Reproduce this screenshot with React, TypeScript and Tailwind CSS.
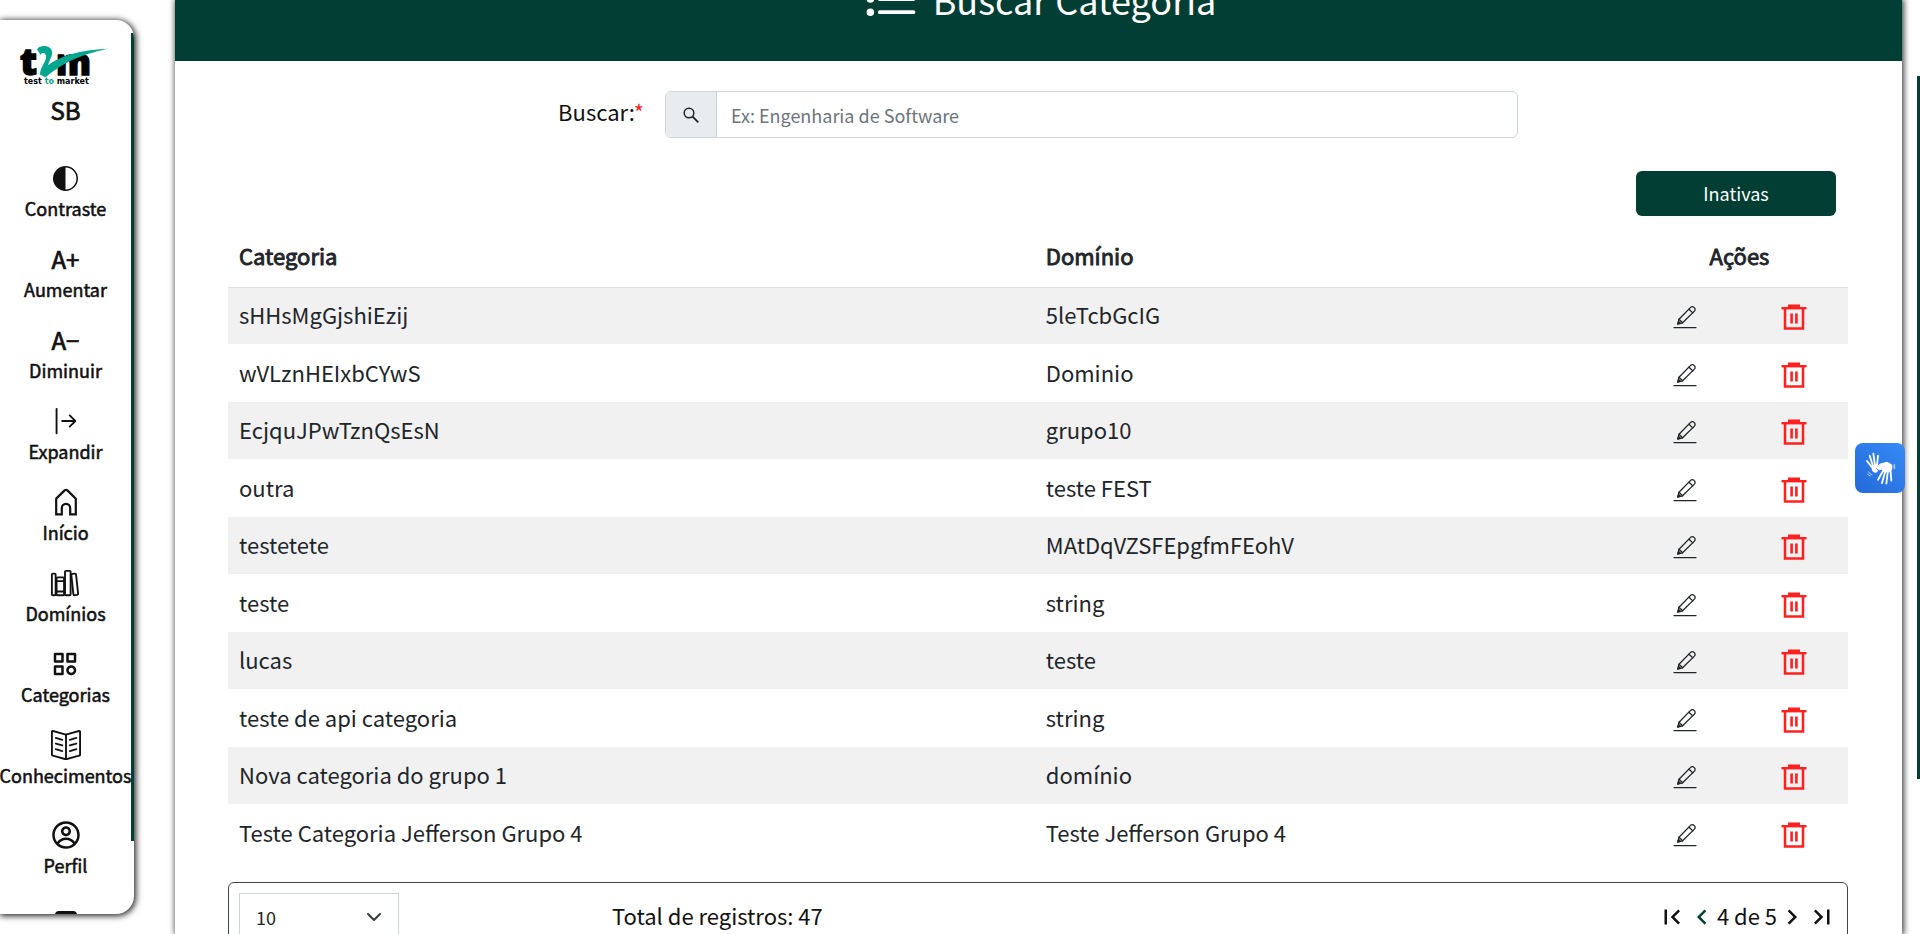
import type { ReactNode } from "react";
import { BsArrowBarRight, BsCircleHalf } from "react-icons/bs";
import { BiCategory } from "react-icons/bi";
import { CgProfile } from "react-icons/cg";
import { IoLibraryOutline, IoListOutline } from "react-icons/io5";
import { MdFirstPage, MdLastPage, MdNavigateBefore, MdNavigateNext } from "react-icons/md";
import { SlBookOpen } from "react-icons/sl";

const rows = [
  ["sHHsMgGjshiEzij", "5leTcbGcIG"],
  ["wVLznHEIxbCYwS", "Dominio"],
  ["EcjquJPwTznQsEsN", "grupo10"],
  ["outra", "teste FEST"],
  ["testetete", "MAtDqVZSFEpgfmFEohV"],
  ["teste", "string"],
  ["lucas", "teste"],
  ["teste de api categoria", "string"],
  ["Nova categoria do grupo 1", "domínio"],
  ["Teste Categoria Jefferson Grupo 4", "Teste Jefferson Grupo 4"],
];

function HomeIcon() {
  return (
    <svg width="24" height="28" viewBox="0 0 24 28" fill="none" stroke="currentColor" strokeWidth="2.2">
      <path d="M2.2 10.6 10.6 2.4Q12 1.2 13.4 2.4L21.8 10.6V26.4H16.2V20a4.2 4.2 0 0 0-8.4 0V26.4H2.2Z" />
    </svg>
  );
}

function SearchIcon() {
  return (
    <svg width="18" height="18" viewBox="0 0 18 18" fill="none" stroke="currentColor">
      <circle cx="7" cy="7" r="4.8" strokeWidth="1.5" />
      <path d="m10.500 10.500 5.800 5.800" strokeWidth="1.800" />
    </svg>
  );
}

function PencilIcon() {
  return (
    <svg width="24" height="24" viewBox="0 0 24 24" fill="none" stroke="currentColor" strokeWidth="1.3" strokeLinejoin="round" strokeLinecap="round">
      <path d="M6 14.2 17.6 2.4a2.3 2.3 0 0 1 3.4 0l.4.4a2.3 2.3 0 0 1 0 3.3L9.6 17.8 4.8 19Z" />
      <path d="m16 4.2 3.8 3.7M6 14.2l3.6 3.6" />
      <path d="m4.8 19 .8-2.6 1.7 1.8Z" fill="currentColor" />
      <path d="M1 22.6h22" />
    </svg>
  );
}

function TrashIcon() {
  return (
    <svg width="26" height="26" viewBox="0 0 26 26" fill="none" stroke="currentColor">
      <path d="M7 2h12" strokeWidth="3" />
      <path d="M.5 4.2h25" strokeWidth="2.4" />
      <path d="M4 4v20.500h18V4" strokeWidth="2.500" />
      <path d="M10.600 9.500v10M15.400 9.500v10" strokeWidth="2.600" />
    </svg>
  );
}

function Logo() {
  return (
    <svg width="96" height="42" viewBox="0 0 96 42" className="font-['Open_Sans',sans-serif]" aria-label="t2m test to market">
      <text x="2" y="30.500" fontSize="37" fontWeight="800" fill="#000" stroke="#000" strokeWidth="1.400">t</text>
      <text x="38" y="30.500" fontSize="35" fontWeight="800" fill="#000" stroke="#000" strokeWidth="1.400">m</text>
      <path d="M19 5.200C20.600 2.600 25 1.400 28.400 2.200c5.200 1.200 6.800 5.400 5 10.400-1 2.800-2.600 5.600-3.400 8.600C43 12 61 6 90 4.800 71 9 49 15 27.600 33.200L22 30.600c0-7 5.400-11.600 6-17 .4-3.400-1.400-5.200-3.600-4.600-1 .3-1.600 1.200-1.600 2.200Z" fill="#03a78f" />
      <g className="font-['DejaVu_Sans',sans-serif]" fontSize="8" fontWeight="700">
        <text x="6" y="39.500" fill="#000">test <tspan fill="#03a78f">to</tspan> market</text>
      </g>
    </svg>
  );
}

function HandsIcon() {
  return (
    <svg width="50" height="50" viewBox="15 13 150 150" fill="none" stroke="#fff" strokeLinecap="round" strokeLinejoin="round">
      <path d="M66 86 51 67M69 82 59 51M75 80 70 45M81 80 84 51" strokeWidth="5.500" />
      <path d="M66 82 81 78 83 82 76 89 82 96 78 100Q72 101 68 95Z" fill="#fff" strokeWidth="4" />
      <path d="M80 85 94 76 112 72 123 79 124 92 115 99 102 98 98 90 88 92Z" fill="#fff" strokeWidth="5" />
      <path d="M102 92 84 123M107 94 96 133M114 94 109 135M121 90 124 126" strokeWidth="5.500" />
      <path d="M56 100q3 7 10 9M53 106q3 6 7 6M129 79v9M134 78v12" strokeWidth="2" />
    </svg>
  );
}

const items: { label: string; icon: ReactNode }[] = [
  { label: "Contraste", icon: <BsCircleHalf size={25} /> },
  { label: "Aumentar", icon: <span className="text-2xl leading-none [-webkit-text-stroke:0.03em]">A+</span> },
  { label: "Diminuir", icon: <span className="text-2xl leading-none [-webkit-text-stroke:0.03em]">A−</span> },
  { label: "Expandir", icon: <BsArrowBarRight size={30} /> },
  { label: "Início", icon: <HomeIcon /> },
  { label: "Domínios", icon: <IoLibraryOutline size={30} /> },
  { label: "Categorias", icon: <BiCategory size={30} /> },
  { label: "Conhecimentos", icon: <SlBookOpen size={30} /> },
];

function SideItem({ label, icon }: { label: string; icon: ReactNode }) {
  return (
    <button type="button" className="flex flex-col items-center gap-[3px]">
      <span className="flex h-[30px] items-center justify-center">{icon}</span>
      <span className="text-lg leading-6 [-webkit-text-stroke:0.03em]">{label}</span>
    </button>
  );
}

export default function App() {
  return (
    <div className="relative flex h-screen overflow-hidden bg-white font-['Noto_Sans_CJK_JP',sans-serif] text-[#111]">
      <aside className="relative my-5 w-[134px] shrink-0 overflow-hidden rounded-r-[18px] bg-white shadow-[1px_1px_6px_1px_rgba(0,0,0,0.85)]">
        <nav className="flex w-[131px] flex-col items-center pt-6">
          <Logo />
          <h2 className="mt-1.5 mb-[35px] text-2xl leading-9 [-webkit-text-stroke:0.03em]">SB</h2>
          <div className="flex flex-col items-center gap-6">
            {items.map((item) => (
              <SideItem key={item.label} {...item} />
            ))}
          </div>
          <div className="mt-[33px] flex flex-col items-center">
            <SideItem label="Perfil" icon={<CgProfile size={30} />} />
            <span className="mt-[34px] h-4 w-[22px] rounded-sm bg-current" />
          </div>
        </nav>
        <div className="absolute top-[13px] right-0 h-[808px] w-[3px] bg-[#023e33]" />
      </aside>

      <main className="mr-[15px] ml-[41px] min-w-0 flex-1 bg-white shadow-[1px_0_6px_1px_rgba(0,0,0,0.75)]">
        <header className="flex h-[61px] justify-center overflow-hidden bg-[#023e33] text-white">
          <h1 className="-mt-8 flex h-[62px] items-center gap-3 text-4xl">
            <IoListOutline size={60} />
            Buscar Categoria
          </h1>
        </header>

        <div className="pt-[30px] pr-[54px] pl-[53px]">
          <div className="flex justify-center gap-[21px]">
            <label htmlFor="busca" className="text-[22px] leading-10">
              Buscar:<span className="text-[#ff1f1f]">*</span>
            </label>
            <div className="flex h-[47px] w-[853px] overflow-hidden rounded-md border border-[#ced4da]">
              <span className="flex w-[51px] items-center justify-center border-r border-[#ced4da] bg-[#e9ecef] text-[#212529]">
                <SearchIcon />
              </span>
              <input id="busca" type="text" placeholder="Ex: Engenharia de Software" className="min-w-0 flex-1 px-3.5 text-lg outline-none placeholder:text-[#6c757d]" />
            </div>
          </div>

          <div className="mt-[33px] flex justify-end pr-3">
            <button type="button" className="h-[45px] w-[200px] rounded-md bg-[#023e33] pb-0.5 text-lg text-white">Inativas</button>
          </div>

          <table className="mt-3 w-full table-fixed text-left text-[22px] text-[#212529]">
            <colgroup>
              <col />
              <col className="w-[36.8%]" />
              <col className="w-[6.7%]" />
              <col className="w-[6.7%]" />
            </colgroup>
            <thead>
              <tr className="h-[59px] border-b border-[#dee2e6]">
                <th className="px-[11px] pb-1 font-normal [-webkit-text-stroke:0.04em]">Categoria</th>
                <th className="px-[11px] pb-1 font-normal [-webkit-text-stroke:0.04em]">Domínio</th>
                <th colSpan={2} className="pb-1 text-center font-normal [-webkit-text-stroke:0.04em]">Ações</th>
              </tr>
            </thead>
            <tbody>
              {rows.map(([categoria, dominio]) => (
                <tr key={categoria} className="h-[58px] odd:h-[57px] odd:bg-[#f1f1f1]">
                  <td className="px-[11px] pb-0.5">{categoria}</td>
                  <td className="px-[11px] pb-0.5">{dominio}</td>
                  <td className="pt-[3px]">
                    <button type="button" aria-label="Editar" className="mx-auto block"><PencilIcon /></button>
                  </td>
                  <td className="pt-[3px]">
                    <button type="button" aria-label="Excluir" className="mx-auto block text-[#ff1f1f]"><TrashIcon /></button>
                  </td>
                </tr>
              ))}
            </tbody>
          </table>

          <div className="mt-5 flex h-[70px] items-start rounded-md border border-[#444] px-2.5 pt-2.5 text-[22px]">
            <div className="relative">
              <select aria-label="Registros por página" defaultValue="10" className="h-[47px] w-40 appearance-none border border-[#ced4da] bg-white px-4 text-lg text-[#212529]">
                <option>10</option>
              </select>
              <svg className="pointer-events-none absolute top-4 right-[17px]" width="16" height="16" viewBox="0 0 16 16" fill="none" stroke="#343a40" strokeWidth="2" strokeLinecap="round" strokeLinejoin="round">
                <path d="m2 5 6 6 6-6" />
              </svg>
            </div>
            <span className="ml-[213px] leading-[45px]">Total de registros: 47</span>
            <div className="ml-auto flex h-[47px] items-center">
              <button type="button" aria-label="Primeira página"><MdFirstPage size={30} /></button>
              <button type="button" aria-label="Página anterior" className="text-[#023e33]"><MdNavigateBefore size={30} /></button>
              <span className="pb-0.5">4 de 5</span>
              <button type="button" aria-label="Próxima página"><MdNavigateNext size={30} /></button>
              <button type="button" aria-label="Última página"><MdLastPage size={30} /></button>
            </div>
          </div>
        </div>
      </main>

      <div className="mt-[76px] h-[703px] w-[3px] bg-[#023e33]" />

      <button type="button" aria-label="Libras" className="absolute top-[443px] right-[15px] size-[50px] rounded-lg bg-linear-to-tr from-[#2569d8] to-[#358bf7]">
        <HandsIcon />
      </button>
    </div>
  );
}
